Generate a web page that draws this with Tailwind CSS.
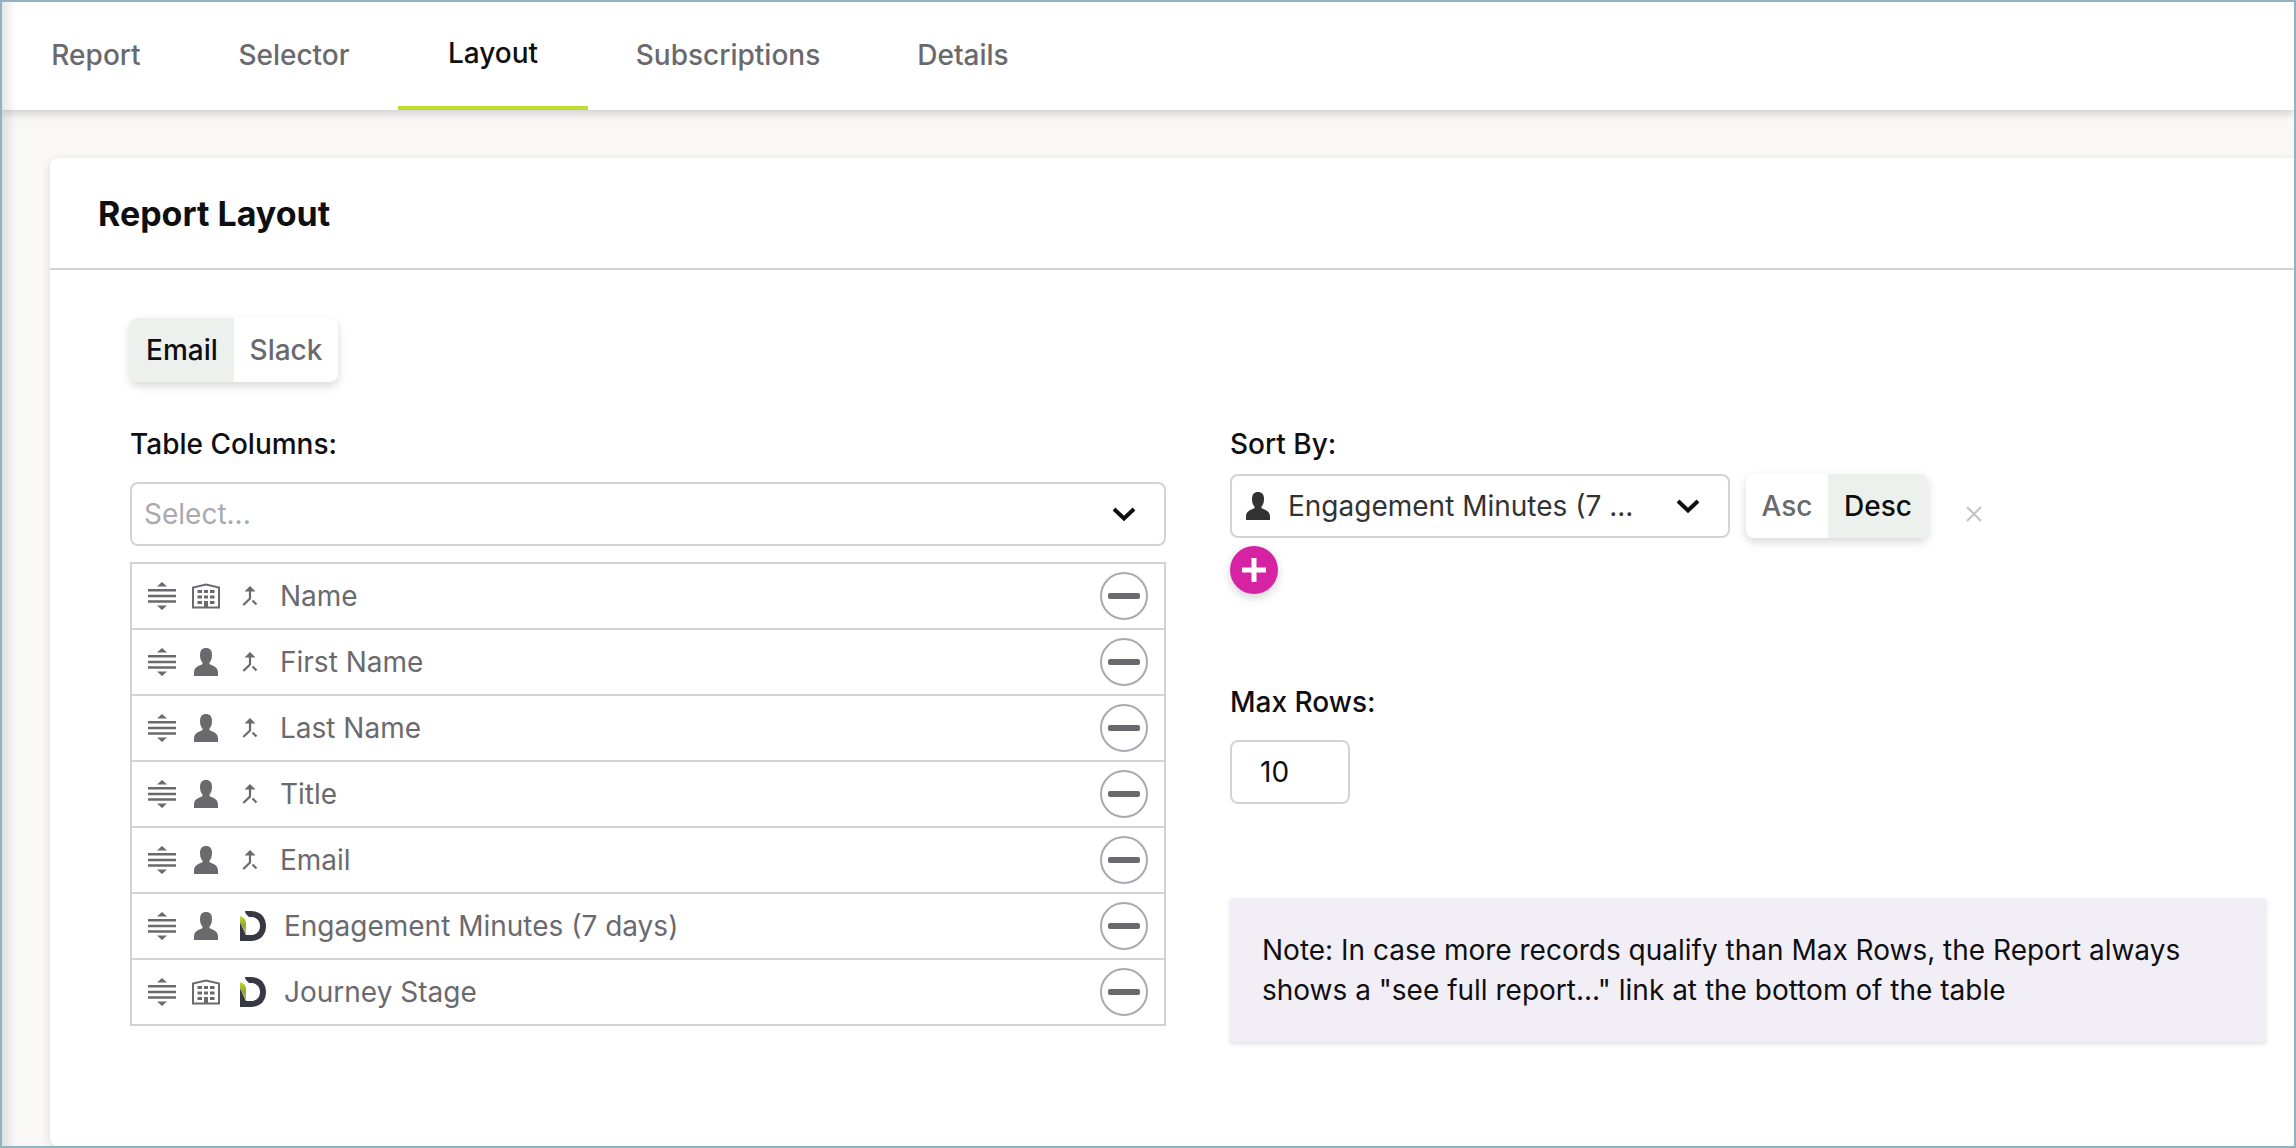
<!DOCTYPE html>
<html lang="en">
<head>
<meta charset="utf-8">
<meta name="viewport" content="width=device-width, initial-scale=1">
<title>Report Layout</title>
<script src="https://cdn.jsdelivr.net/npm/@tailwindcss/browser@4"></script>
</head>
<body class="font-['Inter',sans-serif] text-[28px] leading-10 text-[#0f0f11]">
<svg class="absolute size-0" aria-hidden="true">
  <defs>
    <linearGradient id="leaf" x1="0" y1="0" x2="0" y2="1"><stop offset="0" stop-color="#c0dc2e"/><stop offset="0.5" stop-color="#8fa832"/><stop offset="1" stop-color="#cdb98a"/></linearGradient>
  </defs>
  <symbol id="drag" viewBox="0 0 28 28"><path d="M14 0l5 4.500h-10zM14 28l5-4.500h-10zM0 7h28v2.500H0zM0 12.800h28v2.500H0zM0 18.300h28v2.500H0z" fill="currentColor"/></symbol>
  <symbol id="building" viewBox="0 0 28 28"><path d="M1 25.500V5.500L14 2.500l13 3v20z" fill="none" stroke="currentColor" stroke-width="2"/><path d="M5.500 8h4.500v3H5.500zM12 8h4v3h-4zM18 8h4.500v3H18zM5.500 13.500h4.500v3H5.500zM12 13.500h4v3h-4zM18 13.500h4.500v3H18zM5.500 19h4.500v3H5.500zM18 19h4.500v3H18zM12 19h4v6h-4z" fill="currentColor"/></symbol>
  <symbol id="person" viewBox="0 0 24 28"><path d="M12 0c4 0 6 2.500 6 7 0 3.500-1 6-2.500 7.500v1.500c1 1.300 8.500 2 8.500 8.500V28H0v-3.500C0 18 7.500 17.300 8.500 16v-1.500C7 13 6 10.500 6 7c0-4.500 2-7 6-7z" fill="currentColor"/></symbol>
  <symbol id="merge" viewBox="0 0 16 20"><path d="M8 3v9.500L1.300 19M10.500 14.500l4 4" fill="none" stroke="currentColor" stroke-width="2.200"/><path d="M8 0l5.500 5.500h-11z" fill="currentColor"/></symbol>
  <symbol id="dlogo" viewBox="0 0 26 30"><path d="M5 0h6c9 0 15 6 15 15s-6 15-15 15H0V11l6 13h5c5.500 0 9-3.500 9-9s-3.500-9-9-9H9C7.500 4.500 5 3 5 0z" fill="#363843"/><path d="M0 5c3.500 1 5.500 3 6 6v13L0 11z" fill="url(#leaf)"/></symbol>
  <symbol id="chevron" viewBox="0 0 24 16"><path d="M2 3l10 9.500L22 3" fill="none" stroke="currentColor" stroke-width="4"/></symbol>
</svg>

<div class="relative flex min-h-screen flex-col overflow-hidden border-2 border-[#91b2c0] bg-[#f9f8f6]">
  <nav class="z-10 flex h-[108px] shrink-0 bg-white font-medium text-[#6a6a6e] shadow-[0_2px_10px_rgba(15,15,25,0.22)]" aria-label="Report sections">
    <a href="#report" class="flex w-[188px] items-center justify-center pb-0.5">Report</a>
    <a href="#selector" class="flex w-[208px] items-center justify-center pb-0.5">Selector</a>
    <a href="#layout" aria-current="page" class="flex w-[190px] items-center justify-center border-b-4 border-[#bfdc2e] pb-0.5 text-[#0f0f11]">Layout</a>
    <a href="#subscriptions" class="flex w-[280px] items-center justify-center pb-0.5">Subscriptions</a>
    <a href="#details" class="flex w-[190px] items-center justify-center pb-0.5">Details</a>
  </nav>

  <main class="flex flex-1 flex-col pt-12 pl-12">
    <section class="flex-1 rounded-l-lg bg-white shadow-[0_2px_10px_rgba(15,15,25,0.12)]">
      <header class="flex h-28 items-center border-b-2 border-[#d3d3d3] px-12 pt-0.5">
        <h1 class="text-[34px] font-bold">Report Layout</h1>
      </header>

      <div class="pt-12 pr-7 pl-20">
        <div class="inline-flex h-16 overflow-hidden rounded-lg bg-white align-top font-medium shadow-[0_4px_10px_rgba(15,15,25,0.16)]" role="group" aria-label="Channel">
          <button type="button" aria-pressed="true" class="w-[104px] bg-[#ecf1ee]">Email</button>
          <button type="button" aria-pressed="false" class="w-[104px] text-[#6a6a6e]">Slack</button>
        </div>

        <div class="mt-[42px] grid grid-cols-2 gap-16">
          <div>
            <label for="columns" class="mb-[18px] block font-medium">Table Columns:</label>
            <div class="relative">
              <select id="columns" class="block h-16 w-full appearance-none rounded-lg border-2 border-[#d3d3d3] bg-white px-3 text-[#a9a9b0]">
                <option>Select...</option>
              </select>
              <svg class="pointer-events-none absolute top-6 right-[30px] h-4 w-6"><use href="#chevron"/></svg>
            </div>

            <ul class="mt-4 divide-y-2 divide-[#d3d3d3] border-2 border-[#d3d3d3] text-[#6a6a6e]">
              <li class="flex h-[66px] items-center px-4">
                <svg class="size-7"><use href="#drag"/></svg><svg class="ml-4 size-7"><use href="#building"/></svg><svg class="ml-[22px] h-5 w-4"><use href="#merge"/></svg>
                <span class="ml-[22px] flex-1">Name</span>
                <button type="button" aria-label="Remove Name" class="flex size-12 items-center justify-center rounded-full border-2 border-[#a9a9b0]"><span class="h-1.5 w-8 rounded-xs bg-[#6a6a6e]"></span></button>
              </li>
              <li class="flex h-[66px] items-center px-4">
                <svg class="size-7"><use href="#drag"/></svg><svg class="ml-4 size-7"><use href="#person"/></svg><svg class="ml-[22px] h-5 w-4"><use href="#merge"/></svg>
                <span class="ml-[22px] flex-1">First Name</span>
                <button type="button" aria-label="Remove First Name" class="flex size-12 items-center justify-center rounded-full border-2 border-[#a9a9b0]"><span class="h-1.5 w-8 rounded-xs bg-[#6a6a6e]"></span></button>
              </li>
              <li class="flex h-[66px] items-center px-4">
                <svg class="size-7"><use href="#drag"/></svg><svg class="ml-4 size-7"><use href="#person"/></svg><svg class="ml-[22px] h-5 w-4"><use href="#merge"/></svg>
                <span class="ml-[22px] flex-1">Last Name</span>
                <button type="button" aria-label="Remove Last Name" class="flex size-12 items-center justify-center rounded-full border-2 border-[#a9a9b0]"><span class="h-1.5 w-8 rounded-xs bg-[#6a6a6e]"></span></button>
              </li>
              <li class="flex h-[66px] items-center px-4">
                <svg class="size-7"><use href="#drag"/></svg><svg class="ml-4 size-7"><use href="#person"/></svg><svg class="ml-[22px] h-5 w-4"><use href="#merge"/></svg>
                <span class="ml-[22px] flex-1">Title</span>
                <button type="button" aria-label="Remove Title" class="flex size-12 items-center justify-center rounded-full border-2 border-[#a9a9b0]"><span class="h-1.5 w-8 rounded-xs bg-[#6a6a6e]"></span></button>
              </li>
              <li class="flex h-[66px] items-center px-4">
                <svg class="size-7"><use href="#drag"/></svg><svg class="ml-4 size-7"><use href="#person"/></svg><svg class="ml-[22px] h-5 w-4"><use href="#merge"/></svg>
                <span class="ml-[22px] flex-1">Email</span>
                <button type="button" aria-label="Remove Email" class="flex size-12 items-center justify-center rounded-full border-2 border-[#a9a9b0]"><span class="h-1.5 w-8 rounded-xs bg-[#6a6a6e]"></span></button>
              </li>
              <li class="flex h-[66px] items-center px-4">
                <svg class="size-7"><use href="#drag"/></svg><svg class="ml-4 size-7"><use href="#person"/></svg><svg class="ml-5 h-[30px] w-[26px]"><use href="#dlogo"/></svg>
                <span class="ml-[18px] flex-1">Engagement Minutes (7 days)</span>
                <button type="button" aria-label="Remove Engagement Minutes" class="flex size-12 items-center justify-center rounded-full border-2 border-[#a9a9b0]"><span class="h-1.5 w-8 rounded-xs bg-[#6a6a6e]"></span></button>
              </li>
              <li class="flex h-16 items-center px-4">
                <svg class="size-7"><use href="#drag"/></svg><svg class="ml-4 size-7"><use href="#building"/></svg><svg class="ml-5 h-[30px] w-[26px]"><use href="#dlogo"/></svg>
                <span class="ml-[18px] flex-1">Journey Stage</span>
                <button type="button" aria-label="Remove Journey Stage" class="flex size-12 items-center justify-center rounded-full border-2 border-[#a9a9b0]"><span class="h-1.5 w-8 rounded-xs bg-[#6a6a6e]"></span></button>
              </li>
            </ul>
          </div>

          <div>
            <label for="sort" class="mb-2.5 block font-medium">Sort By:</label>
            <div class="flex">
              <div class="relative w-[500px]">
                <select id="sort" class="block h-16 w-full appearance-none rounded-lg border-2 border-[#d3d3d3] bg-white pr-16 pl-14 text-[#333]">
                  <option>Engagement Minutes (7 ...</option>
                </select>
                <svg class="pointer-events-none absolute top-[18px] left-4 h-7 w-6 text-[#333]"><use href="#person"/></svg>
                <svg class="pointer-events-none absolute top-6 right-[30px] h-4 w-6"><use href="#chevron"/></svg>
              </div>
              <div class="ml-4 flex h-16 overflow-hidden rounded-lg bg-white font-medium shadow-[0_4px_10px_rgba(15,15,25,0.16)]" role="group" aria-label="Sort direction">
                <button type="button" aria-pressed="false" class="w-[82px] text-[#6a6a6e]">Asc</button>
                <button type="button" aria-pressed="true" class="w-[100px] bg-[#ecf1ee]">Desc</button>
              </div>
              <button type="button" aria-label="Remove sort" class="ml-[38px] self-end pb-4 text-[#c3c3c3]"><svg class="size-4" viewBox="0 0 16 16"><path d="M1 1l14 14M15 1L1 15" stroke="currentColor" stroke-width="2"/></svg></button>
            </div>
            <button type="button" aria-label="Add sort" class="mt-2 flex size-12 items-center justify-center rounded-full bg-[#d623a3] text-white shadow-[0_4px_10px_rgba(15,15,25,0.18)]"><svg class="size-6" viewBox="0 0 24 24"><path d="M12 0v24M0 12h24" stroke="currentColor" stroke-width="5"/></svg></button>

            <label for="rows" class="mt-[88px] mb-[18px] block font-medium">Max Rows:</label>
            <input id="rows" type="text" inputmode="numeric" value="10" class="block h-16 w-[120px] rounded-lg border-2 border-[#d3d3d3] bg-white pl-7">

            <p class="mt-[94px] rounded-xs bg-[#f1eef6] p-8 shadow-[0_2px_4px_rgba(15,15,25,0.14)]">Note: In case more records qualify than Max Rows, the Report always shows a "see full report..." link at the bottom of the table</p>
          </div>
        </div>
      </div>
    </section>
  </main>

  <div class="pointer-events-none absolute inset-y-0 left-0 z-20 w-3.5 bg-linear-to-r from-black/10 to-transparent"></div>
</div>
</body>
</html>
